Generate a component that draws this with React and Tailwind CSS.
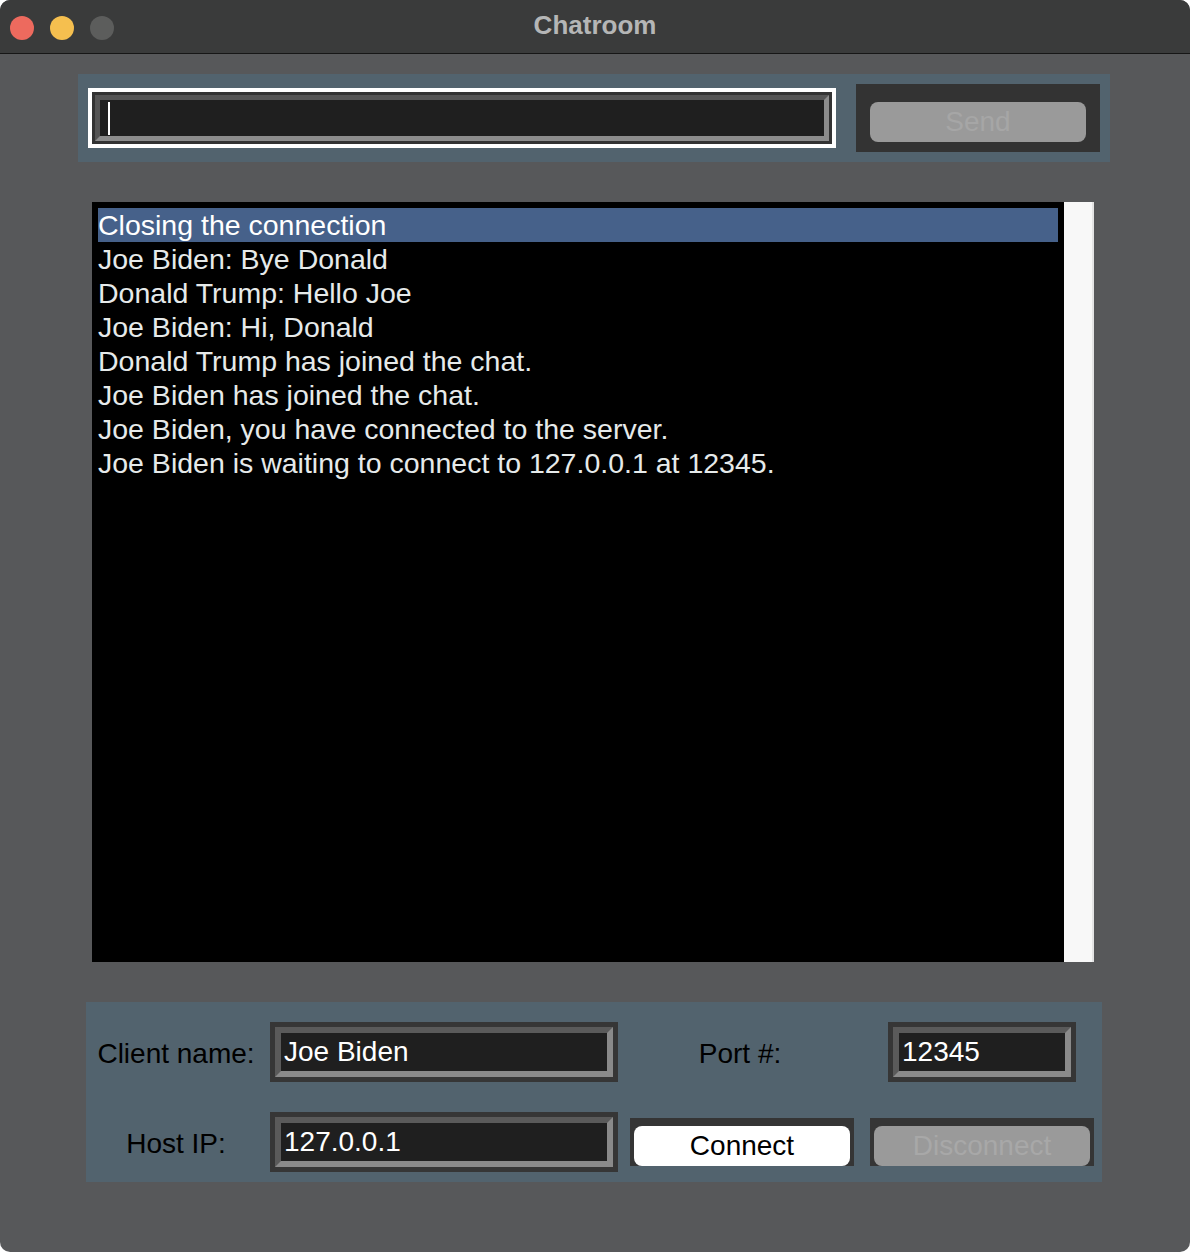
import React from "react";

const font = { fontFamily: '"Liberation Sans", Arial, sans-serif' };

function Entry({ width, value }) {
  return (
    <div className={`${width} h-[60px] bg-[#363636] p-[5px] shrink-0`}>
      <div className="w-full h-full border-[6px] border-t-[#5a5a5a] border-l-[#5a5a5a] border-b-[#8a8a8a] border-r-[#8a8a8a] bg-[#1f1f1f] flex items-center pl-[3px]">
        <span className="text-white text-[28px] leading-none">{value}</span>
      </div>
    </div>
  );
}

function Btn({ children, enabled }) {
  return (
    <div className="w-[224px] h-[48px] bg-[#353535] pt-[8px] px-[4px] shrink-0">
      <div
        className={`w-full h-[40px] rounded-[8px] flex items-center justify-center text-[28px] leading-none ${
          enabled ? "bg-white text-black" : "bg-[#9a9a9a] text-[#a8a8a8]"
        }`}
      >
        {children}
      </div>
    </div>
  );
}

const lines = [
  "Joe Biden: Bye Donald",
  "Donald Trump: Hello Joe",
  "Joe Biden: Hi, Donald",
  "Donald Trump has joined the chat.",
  "Joe Biden has joined the chat.",
  "Joe Biden, you have connected to the server.",
  "Joe Biden is waiting to connect to 127.0.0.1 at 12345.",
];

export default function App() {
  return (
    <div className="w-[1190px] h-[1252px] bg-white" style={font}>
      <div className="w-full h-full rounded-[10px] overflow-hidden bg-[#57585a] flex flex-col">
        {/* title bar */}
        <div className="h-[54px] bg-[#3a3b3b] border-b border-[#161616] grid grid-cols-[1fr_auto_1fr] items-center shrink-0">
          <div className="flex items-center gap-[16px] pl-[10px] pt-[2px]">
            <div className="w-[24px] h-[24px] rounded-full bg-[#ed6a5e]" />
            <div className="w-[24px] h-[24px] rounded-full bg-[#f5bf4f]" />
            <div className="w-[24px] h-[24px] rounded-full bg-[#5c5d5c]" />
          </div>
          <div className="text-[26px] font-bold text-[#b5b6b6] leading-none pb-[3px]">Chatroom</div>
          <div />
        </div>

        {/* top panel */}
        <div className="mt-[20px] ml-[78px] w-[1032px] h-[88px] bg-[#52636e] flex items-center pl-[10px] gap-[20px]">
          <div className="w-[748px] h-[60px] border-4 border-white bg-[#333333] p-[3px] shrink-0">
            <div className="w-full h-full border-[5px] border-t-[#555555] border-l-[#555555] border-b-[#8c8c8c] border-r-[#8c8c8c] bg-[#1f1f1f] flex items-center pl-[8px]">
              <div className="w-[2px] h-[33px] bg-white" />
            </div>
          </div>
          <div className="w-[244px] h-[68px] bg-[#333333] pt-[18px] px-[14px] shrink-0">
            <div className="w-full h-[40px] rounded-[8px] bg-[#9a9a9a] text-[#a6a6a6] text-[28px] leading-none flex items-center justify-center">
              Send
            </div>
          </div>
        </div>

        {/* listbox */}
        <div className="mt-[40px] ml-[92px] w-[1002px] h-[760px] flex shrink-0">
          <div className="w-[972px] h-full bg-black p-[6px]">
            <div className="h-[34px] bg-[#46618a] text-white text-[28.5px] leading-[34px] whitespace-nowrap">
              Closing the connection
            </div>
            {lines.map((l) => (
              <div key={l} className="h-[34px] text-[#e6eaea] text-[28.5px] leading-[34px] whitespace-nowrap">
                {l}
              </div>
            ))}
          </div>
          <div className="w-[30px] h-full bg-[#f8f8f8] border-r-2 border-[#e4e4e4]" />
        </div>

        {/* bottom panel */}
        <div className="mt-[40px] ml-[86px] w-[1016px] h-[180px] bg-[#52636e] pt-[20px] flex flex-col gap-[30px]">
          <div className="flex items-center h-[60px]">
            <div className="w-[180px] text-center text-black text-[28px] leading-none pt-[4px]">Client name:</div>
            <div className="ml-[4px]">
              <Entry width="w-[348px]" value="Joe Biden" />
            </div>
            <div className="ml-[12px] w-[224px] text-center text-black text-[28px] leading-none pt-[4px] pr-[4px]">Port #:</div>
            <div className="ml-[16px] w-[224px] flex justify-center">
              <Entry width="w-[188px]" value="12345" />
            </div>
          </div>
          <div className="flex items-center h-[60px]">
            <div className="w-[180px] text-center text-black text-[28px] leading-none pt-[4px]">Host IP:</div>
            <div className="ml-[4px]">
              <Entry width="w-[348px]" value="127.0.0.1" />
            </div>
            <div className="ml-[12px]">
              <Btn enabled>Connect</Btn>
            </div>
            <div className="ml-[16px]">
              <Btn>Disconnect</Btn>
            </div>
          </div>
        </div>
      </div>
    </div>
  );
}
